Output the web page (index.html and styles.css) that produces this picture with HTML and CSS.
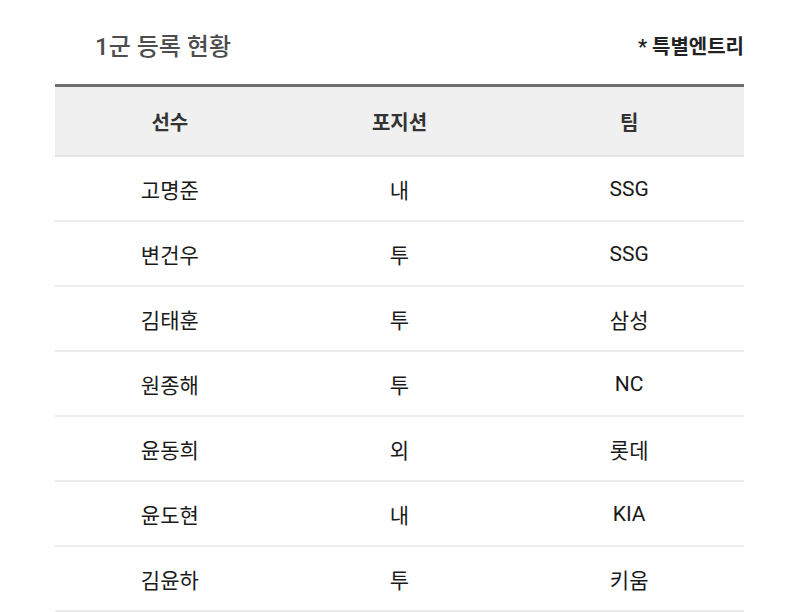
FILE: index.html
```html
<!DOCTYPE html>
<html lang="ko">
<head>
<meta charset="utf-8">
<link rel="stylesheet" href="styles.css">
</head>
<body>
<div class="wrap">
  <div class="top">
    <h2 class="title">1군 등록 현황</h2>
    <span class="note">* 특별엔트리</span>
  </div>
  <table class="roster">
    <thead>
      <tr><th>선수</th><th>포지션</th><th>팀</th></tr>
    </thead>
    <tbody>
      <tr><td>고명준</td><td>내</td><td>SSG</td></tr>
      <tr><td>변건우</td><td>투</td><td>SSG</td></tr>
      <tr><td>김태훈</td><td>투</td><td>삼성</td></tr>
      <tr><td>원종해</td><td>투</td><td>NC</td></tr>
      <tr><td>윤동희</td><td>외</td><td>롯데</td></tr>
      <tr><td>윤도현</td><td>내</td><td>KIA</td></tr>
      <tr><td>김윤하</td><td>투</td><td>키움</td></tr>
    </tbody>
  </table>
</div>
</body>
</html>
```
FILE: styles.css
```css
html, body {
  margin: 0;
  padding: 0;
  background: #fff;
  font-family: Roboto, "Noto Sans CJK KR", sans-serif;
  color: #222;
}
.wrap {
  margin-left: 55px;
  width: 689px;
}
.top {
  display: flex;
  justify-content: space-between;
  align-items: center;
  height: 84px;
  padding-top: 10px;
  box-sizing: border-box;
}
.title {
  margin: 0;
  padding-left: 40px;
  font-size: 24px;
  font-weight: 500;
  color: #4d4d4d;
  line-height: 1;
}
.note {
  font-size: 20px;
  font-weight: 700;
  color: #222;
  line-height: 1;
}
.roster {
  width: 100%;
  border-collapse: collapse;
  table-layout: fixed;
  border-top: 3px solid #6e6e6e;
}
.roster th {
  background: #f0f0f0;
  height: 68px;
  font-size: 20px;
  font-weight: 700;
  color: #333;
  border-bottom: 2px solid #e3e3e3;
  padding: 0;
}
.roster td {
  height: 63px;
  text-align: center;
  font-size: 21px;
  font-weight: 400;
  color: #1a1a1a;
  border-bottom: 2px solid #ececec;
  padding: 0;
}
```
